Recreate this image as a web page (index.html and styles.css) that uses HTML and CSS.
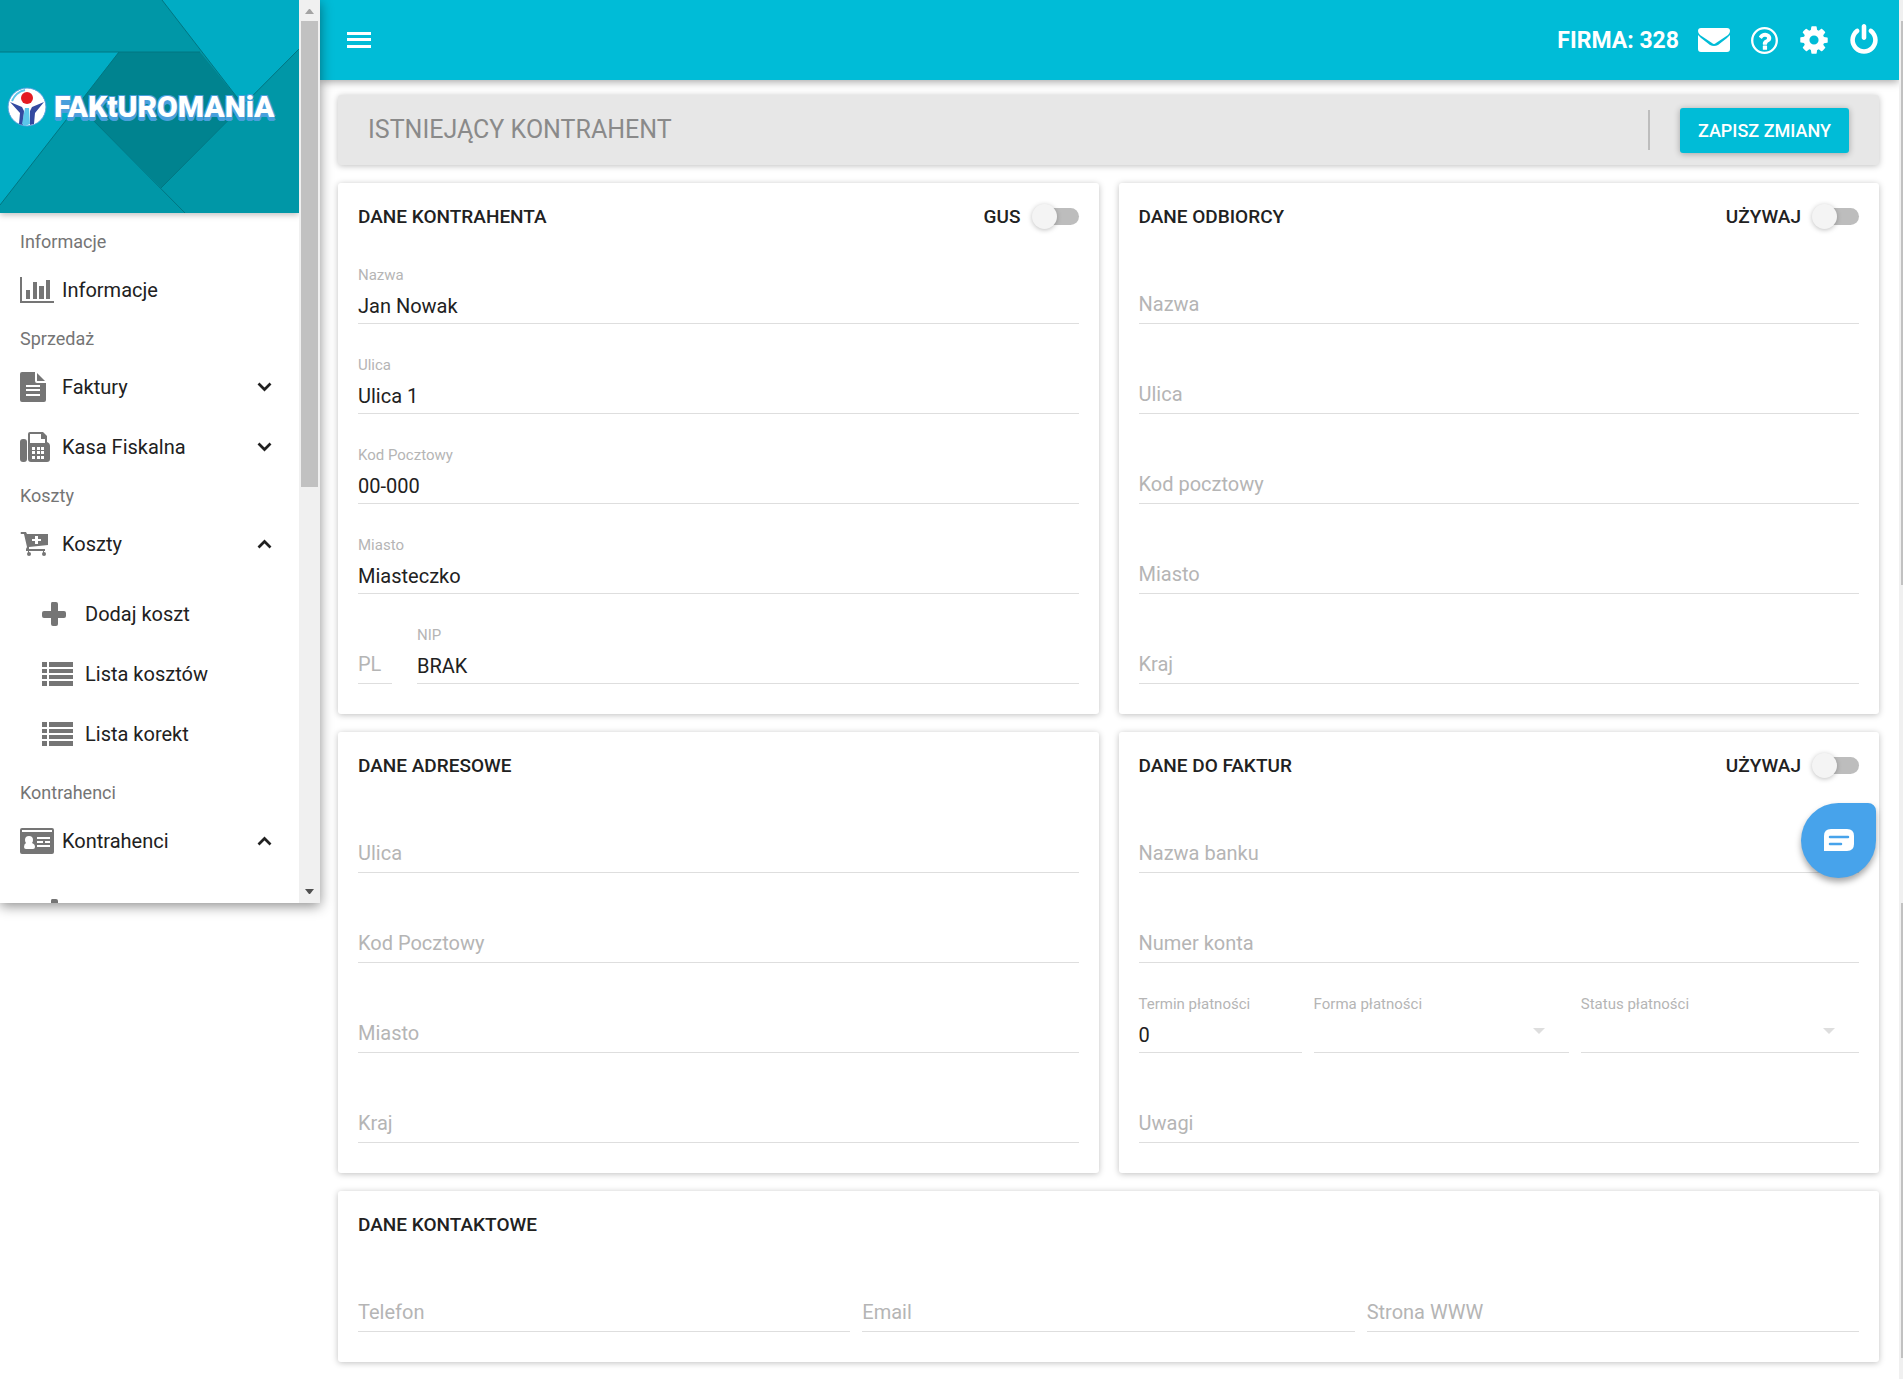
FILE: index.html
```html
<!DOCTYPE html>
<html lang="pl">
<head>
  <meta charset="UTF-8">
  <meta name="viewport" content="width=device-width, initial-scale=1.0">
  <title>Fakturomania - Kontrahent</title>
  <link rel="stylesheet" href="styles.css">
</head>
<body>

  <!-- icons used more than once -->
  <svg class="sprite" aria-hidden="true">
    <symbol id="chevron" viewBox="0 0 15 10">
      <path d="M1.5 1.5l6 6 6-6" fill="none" stroke="#212121" stroke-width="2.700"/>
    </symbol>
    <symbol id="plus" viewBox="0 0 24 24">
      <path d="M10 0h4q2 0 2 2v7h6q2 0 2 2v3q0 2-2 2h-6v6q0 2-2 2h-3q-2 0-2-2v-6H2q-2 0-2-2v-3q0-2 2-2h7V2q0-2 1-2z"/>
    </symbol>
    <symbol id="list" viewBox="0 0 31 24">
      <path d="M0 0h5v5H0zM7 0h24v5H7zM0 7h5v4H0zM7 7h24v4H7zM0 13h5v4H0zM7 13h24v4H7zM0 19h5v5H0zM7 19h24v5H7z"/>
    </symbol>
  </svg>

  <aside class="sidebar">
    <div class="sidebar-content">
      <div class="brand">
        <svg class="brand-bg" viewBox="0 0 299 213" preserveAspectRatio="none" aria-hidden="true">
          <rect width="299" height="213" fill="#0097a7"/>
          <path d="M0 52h119L0 205z" fill="#00acc4"/>
          <path d="M162 0h137v49l-56 56z" fill="#00acc4"/>
          <path d="M119 52h81l43 53-82 83-83-83z" fill="#00838f"/>
          <g fill="none" stroke="#007682" stroke-width="1">
            <path d="M0 52h200M162 0l81 105M119 52L0 205M78 105l107 108M161 188L299 49"/>
          </g>
        </svg>
        <a class="logo" href="#">
          <svg width="40" height="40" viewBox="0 0 40 40" aria-hidden="true">
            <circle cx="20" cy="20" r="19" fill="#fff" stroke="#4a9fdc" stroke-width="1"/>
            <path d="M5 14Q9 5 18 3" fill="none" stroke="#5cc6ea" stroke-width="2"/>
            <path d="M3 15l12 5 2 4-1 14-4-1 1-11z" fill="#3349a0"/>
            <path d="M37 15l-12 5-2 4 0 14 4-1 1-11z" fill="#3349a0"/>
            <path d="M18 21h4l1 16-5 2-3-2z" fill="#5cc6ea"/>
            <circle cx="20" cy="11" r="6" fill="#e31b23"/>
          </svg>
          <span>FAKtUROMANiA</span>
        </a>
      </div>

      <nav class="menu">
        <h2>Informacje</h2>
        <a href="#">
          <svg width="34" height="26" viewBox="0 0 34 26"><path d="M0 0h2v24h32v2H0zM6 13h4v9H6zM13 5h4v17h-4zM19 9h5v13h-5zM26 3h4v19h-4z"/></svg>
          <span>Informacje</span>
        </a>

        <h2>Sprzedaż</h2>
        <a href="#">
          <svg width="26" height="30" viewBox="0 0 26 30"><path fill-rule="evenodd" d="M2 0h13v9q0 2 2 2h9v17q0 2-2 2H2q-2 0-2-2V2q0-2 2-2zM6 13v2h14v-2zM6 17v2h14v-2zM6 22v2h14v-2z"/><path d="M17 1l8 8h-8z"/></svg>
          <span>Faktury</span>
          <svg class="arrow"><use href="#chevron"/></svg>
        </a>
        <a href="#">
          <svg width="30" height="30" viewBox="0 0 30 30"><rect y="7" width="7" height="23" rx="3"/><path fill-rule="evenodd" d="M10 0h13l4 4v6q3 1 3 4v13q0 3-3 3H11q-3 0-3-3V2q0-2 2-2zM10 2v9h15V7h-4V2zM12 15v3h3v-3zM17 15v3h3v-3zM21 15v3h3v-3zM12 19v3h3v-3zM17 19v3h3v-3zM21 19v3h3v-3zM12 24v3h3v-3zM17 24v3h3v-3zM21 24v3h3v-3z"/></svg>
          <span>Kasa Fiskalna</span>
          <svg class="arrow"><use href="#chevron"/></svg>
        </a>

        <h2>Koszty</h2>
        <a href="#">
          <svg width="28" height="24" viewBox="0 0 28 24"><path fill-rule="evenodd" d="M1 0h5l1 2h21v11L9 15v2h16v2H6v-2l1-2L4 2H1Q0 1 1 0zM15 4v3h-3v2h3v3h3V9h3V7h-3V4z"/><path d="M8 18h1v3H8zM23 18h1v3h-1z"/><circle cx="9" cy="22" r="2"/><circle cx="24" cy="22" r="2"/></svg>
          <span>Koszty</span>
          <svg class="arrow up"><use href="#chevron"/></svg>
        </a>
        <div class="submenu">
          <a href="#"><svg width="24" height="24"><use href="#plus"/></svg><span>Dodaj koszt</span></a>
          <a href="#"><svg width="31" height="24"><use href="#list"/></svg><span>Lista kosztów</span></a>
          <a href="#"><svg width="31" height="24"><use href="#list"/></svg><span>Lista korekt</span></a>
        </div>

        <h2>Kontrahenci</h2>
        <a href="#">
          <svg width="34" height="26" viewBox="0 0 34 26"><path fill-rule="evenodd" d="M2 0h30q2 0 2 2v22q0 2-2 2H2q-2 0-2-2V2q0-2 2-2zM2 2v2h30V2zM17 9v2h13V9zM17 13v2h6v-2zM25 13v2h5v-2zM17 17v2h13v-2z"/><path fill="#fff" d="M9 8q4 0 4 4 0 2-1 3 3 1 3 4 0 2-2 2H6q-2 0-2-2 0-3 2-4-1-1-1-3 0-4 4-4z"/></svg>
          <span>Kontrahenci</span>
          <svg class="arrow up"><use href="#chevron"/></svg>
        </a>
        <div class="submenu">
          <a href="#" aria-label="Dodaj kontrahenta"><svg width="24" height="24"><use href="#plus"/></svg></a>
        </div>
      </nav>
    </div>
    <div class="scrollbar">
      <svg width="9" height="5" viewBox="0 0 9 5"><path d="M0 5l4-5h1l4 5z" fill="#a3a3a3"/></svg>
      <div class="scrollbar-thumb"></div>
      <svg class="scroll-down" width="9" height="5" viewBox="0 0 9 5"><path d="M0 0h9L5 5H4z" fill="#505050"/></svg>
    </div>
  </aside>

  <div class="page">
    <header class="topbar">
      <button class="hamburger" aria-label="Menu">
        <svg width="24" height="16" viewBox="0 0 24 16"><path d="M0 0h24v3H0zM0 6h24v3H0zM0 13h24v3H0z"/></svg>
      </button>
      <span class="company">FIRMA: 328</span>
      <a href="#" aria-label="Wiadomości">
        <svg width="32" height="24" viewBox="0 0 32 24"><path d="M3 0h26q3 0 3 3 0 2-2 4L18 15q-2 2-4 0L2 7Q0 5 0 3q0-3 3-3z"/><path d="M0 7q1 1 3 3l9 7q4 2 8 0l9-7q2-2 3-3v14q0 3-3 3H3q-3 0-3-3z"/></svg>
      </a>
      <a href="#" aria-label="Pomoc">
        <svg width="27" height="27" viewBox="0 0 27 27"><circle cx="13.5" cy="13.5" r="12.3" fill="none" stroke="#fff" stroke-width="2.3"/><path transform="translate(1.6 2.4) scale(.0133)" d="M1088 1256v240q0 16-12 28t-28 12h-240q-16 0-28-12t-12-28v-240q0-16 12-28t28-12h240q16 0 28 12t12 28zm316-600q0 54-15.500 101t-35 76.500-55 59.500-57.500 43.500-61 35.500q-41 23-68.500 65t-27.500 67q0 17-12 32.500t-28 15.500h-240q-15 0-25.500-18.500t-10.500-37.500v-45q0-83 65-156.500t143-108.500q59-27 84-56t25-76q0-42-46.500-74t-107.500-32q-65 0-108 29-35 25-107 115-13 16-31 16-12 0-25-8l-164-125q-13-10-15.500-25t5.500-28q160-266 464-266 80 0 161 31t146 83 106 127.500 41 158.500z"/></svg>
      </a>
      <a href="#" aria-label="Ustawienia">
        <svg width="32" height="32" viewBox="0 0 1792 1792"><path d="M1152 896q0-106-75-181t-181-75-181 75-75 181 75 181 181 75 181-75 75-181zm512-109v222q0 12-8 23t-20 13l-185 28q-19 54-39 91 35 50 107 138 10 12 10 25t-9 23q-27 37-99 108t-94 71q-12 0-26-9l-138-108q-44 23-91 38-16 136-29 186-7 28-36 28h-222q-14 0-24.500-8.500t-11.500-21.500l-28-184q-49-16-90-37l-141 107q-10 9-25 9-14 0-25-11-126-114-165-168-7-10-7-23 0-12 8-23 15-21 51-66.500t54-70.500q-27-50-41-99l-183-27q-13-2-21-12.500t-8-23.500v-222q0-12 8-23t19-13l186-28q14-46 39-92-40-57-107-138-10-12-10-24 0-10 9-23 26-36 98.500-107.500t94.500-71.500q13 0 26 10l138 107q44-23 91-38 16-136 29-186 7-28 36-28h222q14 0 24.500 8.500t11.500 21.500l28 184q49 16 90 37l142-107q9-9 24-9 13 0 25 10 129 119 165 170 7 8 7 22 0 12-8 23-15 21-51 66.500t-54 70.500q26 50 41 98l183 28q13 2 21 12.500t8 23.500z"/></svg>
      </a>
      <a href="#" aria-label="Wyloguj">
        <svg width="32" height="32" viewBox="0 0 1792 1792"><path d="M1664 896q0 156-61 298t-164 245-245 164-298 61-298-61-245-164-164-245-61-298q0-182 80.500-343t226.500-270q43-32 95.500-25t83.500 50q32 42 24.500 94.500t-49.500 84.500q-98 74-151.500 181t-53.500 228q0 104 40.500 198.500t109.500 163.500 163.500 109.500 198.500 40.500 198.500-40.500 163.500-109.500 109.500-163.500 40.500-198.500q0-121-53.500-228t-151.500-181q-42-32-49.500-84.500t24.500-94.500q31-43 84-50t95 25q146 109 226.500 270t80.500 343zm-640-768v640q0 52-38 90t-90 38-90-38-38-90v-640q0-52 38-90t90-38 90 38 38 90z"/></svg>
      </a>
    </header>

    <main class="content">
      <div class="title-bar">
        <h1>Istniejący kontrahent</h1>
        <button class="save" type="submit" form="contractor">Zapisz zmiany</button>
      </div>

      <form id="contractor" class="cards">
        <section class="card">
          <div class="card-header">
            <h2>Dane kontrahenta</h2>
            <label class="switch">GUS <input type="checkbox" name="gus"></label>
          </div>
          <div class="field">
            <label for="name">Nazwa</label>
            <input type="text" id="name" value="Jan Nowak">
          </div>
          <div class="field">
            <label for="street">Ulica</label>
            <input type="text" id="street" value="Ulica 1">
          </div>
          <div class="field">
            <label for="zip">Kod Pocztowy</label>
            <input type="text" id="zip" value="00-000">
          </div>
          <div class="field">
            <label for="city">Miasto</label>
            <input type="text" id="city" value="Miasteczko">
          </div>
          <div class="row nip-row">
            <div class="field"><input type="text" placeholder="PL" aria-label="Prefiks"></div>
            <div class="field">
              <label for="nip">NIP</label>
              <input type="text" id="nip" value="BRAK">
            </div>
          </div>
        </section>

        <section class="card">
          <div class="card-header">
            <h2>Dane odbiorcy</h2>
            <label class="switch">UŻYWAJ <input type="checkbox" name="use_receiver"></label>
          </div>
          <div class="field"><input type="text" placeholder="Nazwa" aria-label="Nazwa"></div>
          <div class="field"><input type="text" placeholder="Ulica" aria-label="Ulica"></div>
          <div class="field"><input type="text" placeholder="Kod pocztowy" aria-label="Kod pocztowy"></div>
          <div class="field"><input type="text" placeholder="Miasto" aria-label="Miasto"></div>
          <div class="field"><input type="text" placeholder="Kraj" aria-label="Kraj"></div>
        </section>

        <section class="card">
          <div class="card-header">
            <h2>Dane adresowe</h2>
          </div>
          <div class="field"><input type="text" placeholder="Ulica" aria-label="Ulica"></div>
          <div class="field"><input type="text" placeholder="Kod Pocztowy" aria-label="Kod Pocztowy"></div>
          <div class="field"><input type="text" placeholder="Miasto" aria-label="Miasto"></div>
          <div class="field"><input type="text" placeholder="Kraj" aria-label="Kraj"></div>
        </section>

        <section class="card">
          <div class="card-header">
            <h2>Dane do faktur</h2>
            <label class="switch">UŻYWAJ <input type="checkbox" name="use_invoice"></label>
          </div>
          <div class="field"><input type="text" placeholder="Nazwa banku" aria-label="Nazwa banku"></div>
          <div class="field"><input type="text" placeholder="Numer konta" aria-label="Numer konta"></div>
          <div class="row payment-row">
            <div class="field">
              <label for="term">Termin płatności</label>
              <input type="text" id="term" value="0">
            </div>
            <div class="field select">
              <label for="method">Forma płatności</label>
              <select id="method"><option></option></select>
            </div>
            <div class="field select">
              <label for="status">Status płatności</label>
              <select id="status"><option></option></select>
            </div>
          </div>
          <div class="field"><input type="text" placeholder="Uwagi" aria-label="Uwagi"></div>
        </section>

        <section class="card wide">
          <div class="card-header">
            <h2>Dane kontaktowe</h2>
          </div>
          <div class="row contact-row">
            <div class="field"><input type="tel" placeholder="Telefon" aria-label="Telefon"></div>
            <div class="field"><input type="email" placeholder="Email" aria-label="Email"></div>
            <div class="field"><input type="text" placeholder="Strona WWW" aria-label="Strona WWW"></div>
          </div>
        </section>
      </form>
    </main>
  </div>

  <div class="page-scroll">
    <div class="first"></div>
    <div class="second"></div>
  </div>

  <button class="chat" aria-label="Czat">
    <svg width="30" height="22" viewBox="0 0 30 22"><path d="M7 0h16q7 0 7 7v8q0 7-7 7H0V7q0-7 7-7z" fill="#fff"/><path d="M6 8h18M6 15h11" stroke="#47a3eb" stroke-width="2.500" stroke-linecap="round"/></svg>
  </button>

</body>
</html>
```

FILE: styles.css
```css
* {
  box-sizing: border-box;
}

body {
  display: flex;
  position: relative;
  min-height: 100vh;
  margin: 0;
  color: #212121;
  background: #fff;
  font-family: Roboto, "Liberation Sans", sans-serif;
  font-size: 20px;
}

h1, h2 {
  margin: 0;
}

a {
  color: inherit;
  text-decoration: none;
}

button {
  border: 0;
  padding: 0;
  font-family: inherit;
  cursor: pointer;
}

.sprite {
  position: absolute;
  width: 0;
  height: 0;
}

/* sidebar */
.sidebar {
  display: flex;
  flex: none;
  align-self: flex-start;
  position: relative;
  z-index: 2;
  width: 320px;
  height: 903px;
  background: #fff;
  box-shadow: 0 3px 12px rgba(0, 0, 0, 0.45);
}

.sidebar-content {
  flex: 1;
  overflow: hidden;
}

.brand {
  display: flex;
  align-items: center;
  position: relative;
  height: 213px;
  padding-left: 7px;
  box-shadow: 0 2px 6px rgba(0, 0, 0, 0.25);
}

.brand-bg {
  position: absolute;
  top: 0;
  left: 0;
  width: 100%;
  height: 100%;
}

.logo {
  display: flex;
  align-items: center;
  gap: 7px;
  position: relative;
  color: #fff;
  font-size: 30px;
  font-weight: 900;
  line-height: 40px;
  text-shadow: 0 4px #4a9fdc, 1px 3px #4a9fdc, -1px 3px #4a9fdc, 1px -1px #4a9fdc, -1px -1px #4a9fdc;
}

.menu {
  padding-top: 10px;
}

.menu h2 {
  padding-left: 20px;
  color: #757575;
  font-size: 18px;
  font-weight: 400;
  line-height: 37px;
}

.menu a {
  display: grid;
  grid-template-columns: 42px 1fr 15px;
  align-items: center;
  height: 60px;
  padding: 0 27px 0 20px;
}

.menu svg {
  fill: #757575;
}

.menu .arrow {
  width: 15px;
  height: 10px;
}

.menu .up {
  transform: rotate(180deg);
}

.submenu {
  padding: 10px 0;
}

.submenu a {
  grid-template-columns: 43px 1fr;
  padding-left: 42px;
}

.scrollbar {
  display: flex;
  flex-direction: column;
  align-items: center;
  width: 21px;
  padding: 9px 0;
  background: #f0f0f0;
}

.scrollbar-thumb {
  width: 17px;
  height: 466px;
  margin-top: 7px;
  background: #c1c1c1;
}

.scroll-down {
  margin-top: auto;
}

/* top bar */
.page {
  flex: 1;
  min-width: 0;
}

.topbar {
  display: flex;
  align-items: center;
  height: 80px;
  padding: 0 10px 0 27px;
  color: #fff;
  background: #00bcd7;
  box-shadow: 0 2px 8px rgba(0, 0, 0, 0.35);
}

.topbar svg {
  display: block;
  fill: #fff;
}

.topbar a {
  display: flex;
  justify-content: center;
  width: 50px;
}

.hamburger {
  margin-right: auto;
  background: none;
}

.company {
  margin-right: 10px;
  font-size: 23px;
  font-weight: 700;
}

/* content */
.content {
  padding: 15px 20px 18px 18px;
}

.title-bar,
.card {
  border-radius: 3px;
  box-shadow: 0 1px 6px rgba(0, 0, 0, 0.25);
}

.title-bar {
  display: flex;
  align-items: center;
  height: 70px;
  margin-bottom: 18px;
  padding: 0 30px;
  background: #e7e7e7;
}

.title-bar h1 {
  flex: 1;
  color: #8a8a8a;
  font-size: 25px;
  font-weight: 400;
  line-height: 40px;
  text-transform: uppercase;
  border-right: 2px solid #bdbdbd;
}

.save {
  height: 45px;
  margin-left: 30px;
  padding: 0 18px;
  color: #fff;
  background: #00bcd7;
  border-radius: 3px;
  box-shadow: 0 1px 6px rgba(0, 0, 0, 0.3);
  font-size: 18px;
  font-weight: 500;
  text-transform: uppercase;
}

.cards {
  display: grid;
  grid-template-columns: 1fr 1fr;
  gap: 18px 20px;
}

.card {
  padding: 16px 20px 30px;
  background: #fff;
}

.wide {
  grid-column: span 2;
}

.card-header {
  display: flex;
  justify-content: space-between;
  align-items: center;
  height: 34px;
  margin-bottom: 1px;
}

.card-header h2 {
  font-size: 19px;
  font-weight: 500;
  text-transform: uppercase;
}

.switch {
  display: flex;
  align-items: center;
  gap: 13px;
  font-size: 19px;
  font-weight: 500;
}

.switch input {
  appearance: none;
  position: relative;
  width: 45px;
  height: 17px;
  margin: 0;
  background: #bdbdbd;
  border-radius: 9px;
}

.switch input::before {
  content: "";
  position: absolute;
  top: -4px;
  left: -2px;
  width: 25px;
  height: 25px;
  background: #f4f4f4;
  border-radius: 50%;
  box-shadow: 0 1px 5px rgba(0, 0, 0, 0.25);
}

.switch input:checked::before {
  left: 22px;
  background: #00bcd7;
}

.field {
  display: flex;
  flex-direction: column;
  justify-content: flex-end;
  position: relative;
  min-width: 0;
  height: 90px;
}

.field label {
  color: #b5b5b5;
  font-size: 15px;
  line-height: 20px;
  margin-bottom: 3px;
}

.field input,
.field select {
  appearance: none;
  width: 100%;
  height: 36px;
  padding: 0;
  color: #212121;
  background: none;
  border: 0;
  border-bottom: 1px solid #dedede;
  border-radius: 0;
  outline: 0;
  font-family: inherit;
  font-size: 20px;
}

.field input:focus {
  border-color: #00bcd7;
}

.field input:placeholder-shown {
  padding-bottom: 4px;
}

.field input::placeholder {
  color: #b5b5b5;
  opacity: 1;
}

/* drop-down arrow */
.select::after {
  content: "";
  position: absolute;
  right: 24px;
  bottom: 19px;
  border: 6px solid transparent;
  border-top-color: #dedede;
  border-bottom: 0;
  pointer-events: none;
}

.row {
  display: grid;
}

.nip-row {
  grid-template-columns: 34px 1fr;
  gap: 25px;
}

.payment-row {
  grid-template-columns: 163fr 255fr 278fr;
  gap: 12px;
}

.contact-row {
  grid-template-columns: 1fr 1fr 1fr;
  gap: 12px;
}

.page-scroll {
  flex: none;
  width: 4px;
  padding: 21px 0 0 2px;
  background: #f0f0f0;
}

.page-scroll div {
  background: #c1c1c1;
}

.page-scroll .first {
  height: 564px;
  margin-bottom: 318px;
}

.page-scroll .second {
  height: 455px;
}

.chat {
  display: flex;
  justify-content: center;
  align-items: center;
  position: absolute;
  top: 803px;
  right: 27px;
  width: 75px;
  height: 75px;
  padding-bottom: 2px;
  background: #47a3eb;
  border-radius: 50% 8px 50% 50%;
  box-shadow: 0 4px 6px rgba(0, 0, 0, 0.35);
}
```
